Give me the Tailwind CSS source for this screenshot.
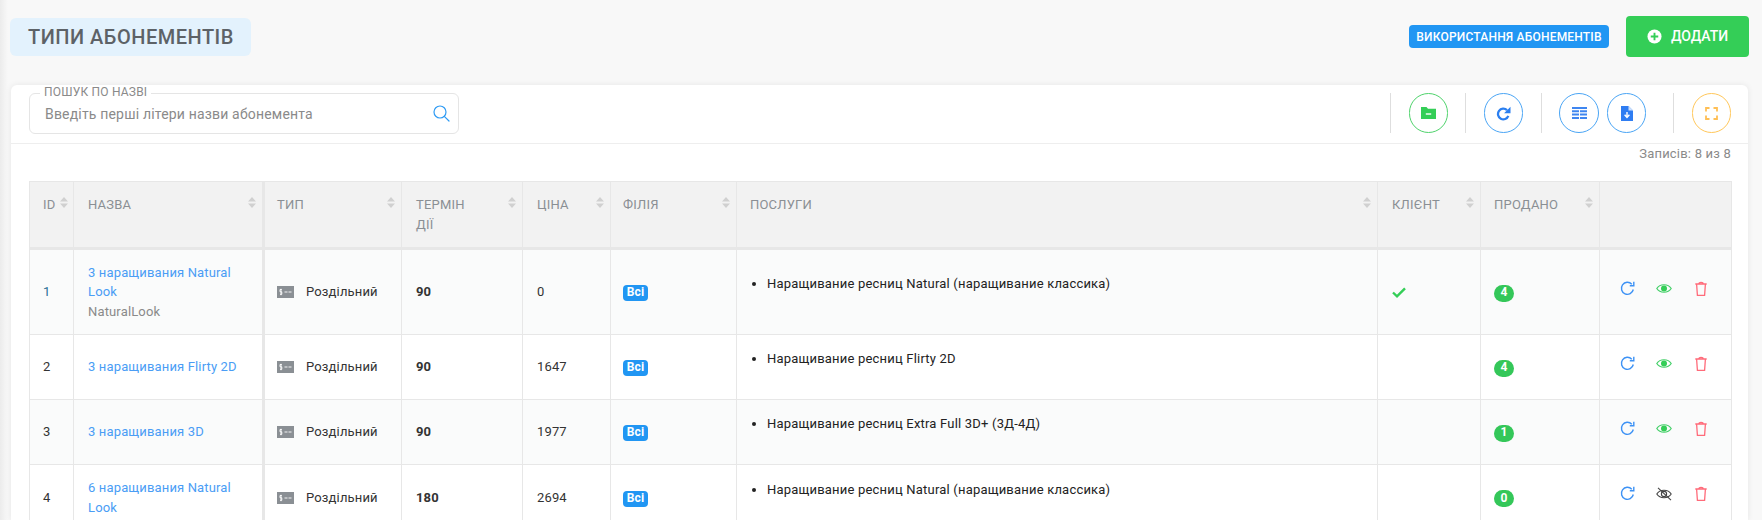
<!DOCTYPE html>
<html lang="uk">
<head>
<meta charset="utf-8">
<title>Типи абонементів</title>
<script src="https://cdn.jsdelivr.net/npm/@tailwindcss/browser@4"></script>
</head>
<body class="m-0 h-[520px] overflow-hidden bg-[#f8f8f8] font-['Roboto',sans-serif] text-[13px] text-[#333]">
<div class="pointer-events-none absolute left-0 top-0 h-[520px] w-2 bg-gradient-to-r from-black/5 to-transparent"></div>

<header class="flex h-[73px] items-center justify-between pl-[10px] pr-[13px] mb-[12px]">
  <h1 class="flex h-[38px] w-[241px] items-center rounded-md bg-[#e3f2fd] pl-[18px] text-[20px] font-medium tracking-[0.5px] text-[#5d6267]">ТИПИ АБОНЕМЕНТІВ</h1>
  <div class="flex items-center gap-[17px]">
    <a class="flex h-[23px] w-[200px] items-center justify-center rounded bg-[#2196f3] text-[12px] font-medium tracking-[0.2px] text-white">ВИКОРИСТАННЯ АБОНЕМЕНТІВ</a>
    <button class="flex h-[41px] w-[123px] items-center justify-center gap-[9px] rounded bg-[#34ce57] text-[14px] font-medium text-white">
      <svg class="h-[15px] w-[15px]" viewBox="0 0 16 16"><circle cx="8" cy="8" r="7.5" fill="#fff"/><path d="M8 4v8M4 8h8" stroke="#34ce57" stroke-width="2"/></svg>
      ДОДАТИ
    </button>
  </div>
</header>

<main class="ml-[11px] mr-[14px] h-[435px] rounded-t-md bg-white shadow-[0_0_6px_rgba(0,0,0,0.08)]">
  <div class="flex h-[59px] items-start justify-between border-b border-[#eeeeee] pl-[18px] pr-[17px] pt-[8px]">
    <div class="relative flex h-[41px] w-[430px] items-center rounded-md border border-[#e5e5e5] pl-[15px] pr-2">
      <span class="absolute left-[10px] top-[-9px] bg-white px-[4px] text-[12px] leading-[14px] tracking-[0.2px] text-[#8a8a8a]">ПОШУК ПО НАЗВІ</span>
      <span class="flex-1 pt-px text-[14px] tracking-[0.18px] text-[#8a8a8a]">Введіть перші літери назви абонемента</span>
      <svg class="h-[17px] w-[17px]" viewBox="0 0 17 17" fill="none" stroke="#2f9bf4" stroke-width="1.2"><circle cx="7" cy="7" r="6"/><path d="M11.3 11.3 16 16" stroke-linecap="round"/></svg>
    </div>
    <div class="flex items-center">
      <span class="h-10 w-px bg-[#dedede]"></span>
      <button class="ml-[18px] flex h-10 w-[39px] items-center justify-center rounded-full border border-[#4fd36c]">
        <svg class="h-[12px] w-[15px]" viewBox="0 0 15 12"><path d="M0 0h5.500l1.500 1.700h8V12H0z" fill="#34ce57"/><path d="M4.800 7h5.400" stroke="#fff" stroke-width="1.400"/></svg>
      </button>
      <span class="ml-[17px] h-10 w-px bg-[#dedede]"></span>
      <button class="ml-[18px] flex h-10 w-[39px] items-center justify-center rounded-full border border-[#4aa5f5]">
        <svg class="h-[15px] w-[15px]" viewBox="0 0 15 15" fill="none"><path d="M12.300 9.800A5.300 5.300 0 1 1 11 4.200" stroke="#2b7ff0" stroke-width="2.300"/><path d="M14.500 .8v6.400H8.100z" fill="#2b7ff0"/></svg>
      </button>
      <span class="ml-[18px] h-10 w-px bg-[#dedede]"></span>
      <button class="ml-[17px] flex h-10 w-[40px] items-center justify-center rounded-full border border-[#4aa5f5]">
        <svg class="h-[12px] w-[15px]" viewBox="0 0 15 12" fill="#3f86f0"><path d="M0 0h15v2H0zM0 3.300h7v2H0zM8 3.300h7v2H8zM0 6.600h7v2H0zM8 6.600h7v2H8zM0 9.900h7V12H0zM8 9.900h7V12H8z"/></svg>
      </button>
      <button class="ml-2 flex h-10 w-[39px] items-center justify-center rounded-full border border-[#4aa5f5]">
        <svg class="h-[15px] w-[12px]" viewBox="0 0 12 15"><path d="M0 0h7.500L12 4.500V15H0z" fill="#2f7df2"/><path d="M7.500 0v4.500H12z" fill="#cfe2fd"/><path d="M6 6v5M3.600 8.800 6 11.400l2.400-2.600" fill="none" stroke="#fff" stroke-width="1.400"/></svg>
      </button>
      <span class="ml-[27px] h-10 w-px bg-[#dedede]"></span>
      <button class="ml-[18px] flex h-10 w-[39px] items-center justify-center rounded-full border border-[#ffc75a]">
        <svg class="h-[13px] w-[13px]" viewBox="0 0 13 13" fill="none" stroke="#ffbf55" stroke-width="1.800"><path d="M1 4.500V1h3.500M8.500 1H12v3.500M12 8.500V12H8.500M4.500 12H1V8.500"/></svg>
      </button>
    </div>
  </div>

  <div class="h-[37px] pr-[17px] pt-[1px] text-right text-[13px] leading-[18px] tracking-[0.2px] text-[#8a8a8a]">Записів: 8 из 8</div>

  <table class="ml-[18px] w-[1702px] table-fixed border-collapse">
    <colgroup>
      <col class="w-[44px]"><col class="w-[190px]"><col class="w-[138px]"><col class="w-[121px]"><col class="w-[88px]"><col class="w-[126px]"><col class="w-[641px]"><col class="w-[103px]"><col class="w-[119px]"><col class="w-[132px]">
    </colgroup>
    <thead>
      <tr class="h-[67px] bg-[#f2f2f2] text-left align-top text-[13px] font-normal tracking-[0.2px] text-[#8a8f94]">
        <th class="relative border border-b-[3px] border-[#e7e7e7] pl-[13px] pt-[13px] font-normal leading-[20px]">ID<svg class="absolute right-[5px] top-[15px] h-[11px] w-[8px]" viewBox="0 0 8 11" fill="#d0d0d0"><path d="M4 0l4 4.500H0zM4 11L0 6.500h8z"/></svg></th>
        <th class="relative border border-b-[3px] border-r-[3px] border-[#e7e7e7] pl-[14px] pt-[13px] font-normal leading-[20px]">НАЗВА<svg class="absolute right-[6px] top-[15px] h-[11px] w-[8px]" viewBox="0 0 8 11" fill="#d0d0d0"><path d="M4 0l4 4.500H0zM4 11L0 6.500h8z"/></svg></th>
        <th class="relative border border-b-[3px] border-[#e7e7e7] pl-[12px] pt-[13px] font-normal leading-[20px]">ТИП<svg class="absolute right-[6px] top-[15px] h-[11px] w-[8px]" viewBox="0 0 8 11" fill="#d0d0d0"><path d="M4 0l4 4.500H0zM4 11L0 6.500h8z"/></svg></th>
        <th class="relative border border-b-[3px] border-[#e7e7e7] pl-[14px] pt-[13px] font-normal leading-[20px]">ТЕРМІН<br>ДІЇ<svg class="absolute right-[6px] top-[15px] h-[11px] w-[8px]" viewBox="0 0 8 11" fill="#d0d0d0"><path d="M4 0l4 4.500H0zM4 11L0 6.500h8z"/></svg></th>
        <th class="relative border border-b-[3px] border-[#e7e7e7] pl-[14px] pt-[13px] font-normal leading-[20px]">ЦІНА<svg class="absolute right-[6px] top-[15px] h-[11px] w-[8px]" viewBox="0 0 8 11" fill="#d0d0d0"><path d="M4 0l4 4.500H0zM4 11L0 6.500h8z"/></svg></th>
        <th class="relative border border-b-[3px] border-[#e7e7e7] pl-[12px] pt-[13px] font-normal leading-[20px]">ФІЛІЯ<svg class="absolute right-[6px] top-[15px] h-[11px] w-[8px]" viewBox="0 0 8 11" fill="#d0d0d0"><path d="M4 0l4 4.500H0zM4 11L0 6.500h8z"/></svg></th>
        <th class="relative border border-b-[3px] border-[#e7e7e7] pl-[13px] pt-[13px] font-normal leading-[20px]">ПОСЛУГИ<svg class="absolute right-[6px] top-[15px] h-[11px] w-[8px]" viewBox="0 0 8 11" fill="#d0d0d0"><path d="M4 0l4 4.500H0zM4 11L0 6.500h8z"/></svg></th>
        <th class="relative border border-b-[3px] border-[#e7e7e7] pl-[14px] pt-[13px] font-normal leading-[20px]">КЛІЄНТ<svg class="absolute right-[6px] top-[15px] h-[11px] w-[8px]" viewBox="0 0 8 11" fill="#d0d0d0"><path d="M4 0l4 4.500H0zM4 11L0 6.500h8z"/></svg></th>
        <th class="relative border border-b-[3px] border-[#e7e7e7] pl-[13px] pt-[13px] font-normal leading-[20px]">ПРОДАНО<svg class="absolute right-[6px] top-[15px] h-[11px] w-[8px]" viewBox="0 0 8 11" fill="#d0d0d0"><path d="M4 0l4 4.500H0zM4 11L0 6.500h8z"/></svg></th>
        <th class="border border-b-[3px] border-[#e7e7e7]"></th>
      </tr>
    </thead>
    <tbody class="leading-[19.5px] tracking-[0.15px] text-[#333]">
      <tr class="h-[86px] bg-[#fafbfb]">
        <td class="border border-[#e7e7e7] pl-[13px]"><span class="text-[#2a6f97]">1</span></td>
        <td class="border border-r-[3px] border-[#e7e7e7] pl-[14px] pr-[8px]"><a class="text-[#4a9df5]">3 наращивания Natural Look</a><div class="text-[#8a8a8a]">NaturalLook</div></td>
        <td class="border border-[#e7e7e7] pl-[12px]"><div class="flex items-center gap-[12px]"><svg class="h-[12px] w-[17px]" viewBox="0 0 17 12"><rect width="17" height="12" fill="#8a8f94"/><path d="M4.800 3.500H3v2.300h1.800v2.500H3M4 2.800v6.400M7.500 6h3M11.500 6h3" fill="none" stroke="#fff" stroke-width=".9"/></svg><span>Роздільний</span></div></td>
        <td class="border border-[#e7e7e7] pl-[14px] font-bold">90</td>
        <td class="border border-[#e7e7e7] pl-[14px]">0</td>
        <td class="border border-[#e7e7e7] pl-[12px]"><span class="inline-flex h-[16px] w-[25px] items-center justify-center rounded bg-[#2196f3] text-[12px] font-bold text-white">Всі</span></td>
        <td class="border border-[#e7e7e7] pl-[14px]"><ul class="mb-4 list-disc pl-[16px] leading-[20px] tracking-[0.2px] text-[#222]"><li>Наращивание ресниц Natural (наращивание классика)</li></ul></td>
        <td class="border border-[#e7e7e7] pl-[14px]"><svg class="h-[11px] w-[14px]" viewBox="0 0 14 11" fill="none" stroke="#34ce57" stroke-width="2.400"><path d="M1 5.500 5 9.300 13 1.300"/></svg></td>
        <td class="border border-[#e7e7e7] pl-[13px]"><span class="inline-flex h-[17px] w-[20px] items-center justify-center rounded-full bg-[#34c759] text-[12px] font-bold text-white">4</span></td>
        <td class="border border-[#e7e7e7] pl-[20px]"><div class="mb-2 flex items-center">
          <svg class="h-[15px] w-[15px]" viewBox="0 0 15 15" fill="none" stroke="#3d92f5" stroke-width="1.400"><path d="M13.300 8.500A6 6 0 1 1 11.800 3.200"/><path d="M13.800 .8v4H9.800"/></svg>
          <svg class="ml-[21px] h-[11px] w-[16px]" viewBox="0 0 16 11"><path d="M.800 5.500C4 .5 12 .5 15.200 5.500 12 10.500 4 10.500 .800 5.500Z" fill="none" stroke="#43cf68" stroke-width="1.200"/><circle cx="8" cy="5.500" r="3" fill="#34ce57"/></svg>
          <svg class="ml-[23px] h-[15px] w-[12px]" viewBox="0 0 12 15" fill="none" stroke="#ff6b7a" stroke-width="1.300"><path d="M.300 3h11.400M1.600 3l.8 11.300h7.200L10.400 3M3.800 3C3.800 .7 8.200 .7 8.200 3"/></svg>
        </div></td>
      </tr>
      <tr class="h-[65px] bg-white">
        <td class="border border-[#e7e7e7] pl-[13px]">2</td>
        <td class="border border-r-[3px] border-[#e7e7e7] pl-[14px] pr-[8px]"><a class="text-[#4a9df5]">3 наращивания Flirty 2D</a></td>
        <td class="border border-[#e7e7e7] pl-[12px]"><div class="flex items-center gap-[12px]"><svg class="h-[12px] w-[17px]" viewBox="0 0 17 12"><rect width="17" height="12" fill="#8a8f94"/><path d="M4.800 3.500H3v2.300h1.800v2.500H3M4 2.800v6.400M7.500 6h3M11.500 6h3" fill="none" stroke="#fff" stroke-width=".9"/></svg><span>Роздільний</span></div></td>
        <td class="border border-[#e7e7e7] pl-[14px] font-bold">90</td>
        <td class="border border-[#e7e7e7] pl-[14px]">1647</td>
        <td class="border border-[#e7e7e7] pl-[12px]"><span class="inline-flex h-[16px] w-[25px] items-center justify-center rounded bg-[#2196f3] text-[12px] font-bold text-white">Всі</span></td>
        <td class="border border-[#e7e7e7] pl-[14px]"><ul class="mb-4 list-disc pl-[16px] leading-[20px] tracking-[0.2px] text-[#222]"><li>Наращивание ресниц Flirty 2D</li></ul></td>
        <td class="border border-[#e7e7e7] pl-[14px]"></td>
        <td class="border border-[#e7e7e7] pl-[13px]"><span class="inline-flex h-[17px] w-[20px] items-center justify-center rounded-full bg-[#34c759] text-[12px] font-bold text-white">4</span></td>
        <td class="border border-[#e7e7e7] pl-[20px]"><div class="mb-2 flex items-center">
          <svg class="h-[15px] w-[15px]" viewBox="0 0 15 15" fill="none" stroke="#3d92f5" stroke-width="1.400"><path d="M13.300 8.500A6 6 0 1 1 11.800 3.200"/><path d="M13.800 .8v4H9.800"/></svg>
          <svg class="ml-[21px] h-[11px] w-[16px]" viewBox="0 0 16 11"><path d="M.800 5.500C4 .5 12 .5 15.200 5.500 12 10.500 4 10.500 .800 5.500Z" fill="none" stroke="#43cf68" stroke-width="1.200"/><circle cx="8" cy="5.500" r="3" fill="#34ce57"/></svg>
          <svg class="ml-[23px] h-[15px] w-[12px]" viewBox="0 0 12 15" fill="none" stroke="#ff6b7a" stroke-width="1.300"><path d="M.300 3h11.400M1.600 3l.8 11.300h7.200L10.400 3M3.800 3C3.800 .7 8.200 .7 8.200 3"/></svg>
        </div></td>
      </tr>
      <tr class="h-[65px] bg-[#fafbfb]">
        <td class="border border-[#e7e7e7] pl-[13px]">3</td>
        <td class="border border-r-[3px] border-[#e7e7e7] pl-[14px] pr-[8px]"><a class="text-[#4a9df5]">3 наращивания 3D</a></td>
        <td class="border border-[#e7e7e7] pl-[12px]"><div class="flex items-center gap-[12px]"><svg class="h-[12px] w-[17px]" viewBox="0 0 17 12"><rect width="17" height="12" fill="#8a8f94"/><path d="M4.800 3.500H3v2.300h1.800v2.500H3M4 2.800v6.400M7.500 6h3M11.500 6h3" fill="none" stroke="#fff" stroke-width=".9"/></svg><span>Роздільний</span></div></td>
        <td class="border border-[#e7e7e7] pl-[14px] font-bold">90</td>
        <td class="border border-[#e7e7e7] pl-[14px]">1977</td>
        <td class="border border-[#e7e7e7] pl-[12px]"><span class="inline-flex h-[16px] w-[25px] items-center justify-center rounded bg-[#2196f3] text-[12px] font-bold text-white">Всі</span></td>
        <td class="border border-[#e7e7e7] pl-[14px]"><ul class="mb-4 list-disc pl-[16px] leading-[20px] tracking-[0.2px] text-[#222]"><li>Наращивание ресниц Extra Full 3D+ (3Д-4Д)</li></ul></td>
        <td class="border border-[#e7e7e7] pl-[14px]"></td>
        <td class="border border-[#e7e7e7] pl-[13px]"><span class="inline-flex h-[17px] w-[20px] items-center justify-center rounded-full bg-[#34c759] text-[12px] font-bold text-white">1</span></td>
        <td class="border border-[#e7e7e7] pl-[20px]"><div class="mb-2 flex items-center">
          <svg class="h-[15px] w-[15px]" viewBox="0 0 15 15" fill="none" stroke="#3d92f5" stroke-width="1.400"><path d="M13.300 8.500A6 6 0 1 1 11.800 3.200"/><path d="M13.800 .8v4H9.800"/></svg>
          <svg class="ml-[21px] h-[11px] w-[16px]" viewBox="0 0 16 11"><path d="M.800 5.500C4 .5 12 .5 15.200 5.500 12 10.500 4 10.500 .800 5.500Z" fill="none" stroke="#43cf68" stroke-width="1.200"/><circle cx="8" cy="5.500" r="3" fill="#34ce57"/></svg>
          <svg class="ml-[23px] h-[15px] w-[12px]" viewBox="0 0 12 15" fill="none" stroke="#ff6b7a" stroke-width="1.300"><path d="M.300 3h11.400M1.600 3l.8 11.300h7.200L10.400 3M3.800 3C3.800 .7 8.200 .7 8.200 3"/></svg>
        </div></td>
      </tr>
      <tr class="h-[66px] bg-white">
        <td class="border border-[#e7e7e7] pl-[13px]">4</td>
        <td class="border border-r-[3px] border-[#e7e7e7] pl-[14px] pr-[8px]"><a class="text-[#4a9df5]">6 наращивания Natural Look</a></td>
        <td class="border border-[#e7e7e7] pl-[12px]"><div class="flex items-center gap-[12px]"><svg class="h-[12px] w-[17px]" viewBox="0 0 17 12"><rect width="17" height="12" fill="#8a8f94"/><path d="M4.800 3.500H3v2.300h1.800v2.500H3M4 2.800v6.400M7.500 6h3M11.500 6h3" fill="none" stroke="#fff" stroke-width=".9"/></svg><span>Роздільний</span></div></td>
        <td class="border border-[#e7e7e7] pl-[14px] font-bold">180</td>
        <td class="border border-[#e7e7e7] pl-[14px]">2694</td>
        <td class="border border-[#e7e7e7] pl-[12px]"><span class="inline-flex h-[16px] w-[25px] items-center justify-center rounded bg-[#2196f3] text-[12px] font-bold text-white">Всі</span></td>
        <td class="border border-[#e7e7e7] pl-[14px]"><ul class="mb-4 list-disc pl-[16px] leading-[20px] tracking-[0.2px] text-[#222]"><li>Наращивание ресниц Natural (наращивание классика)</li></ul></td>
        <td class="border border-[#e7e7e7] pl-[14px]"></td>
        <td class="border border-[#e7e7e7] pl-[13px]"><span class="inline-flex h-[17px] w-[20px] items-center justify-center rounded-full bg-[#34c759] text-[12px] font-bold text-white">0</span></td>
        <td class="border border-[#e7e7e7] pl-[20px]"><div class="mb-2 flex items-center">
          <svg class="h-[15px] w-[15px]" viewBox="0 0 15 15" fill="none" stroke="#3d92f5" stroke-width="1.400"><path d="M13.300 8.500A6 6 0 1 1 11.800 3.200"/><path d="M13.800 .8v4H9.800"/></svg>
          <svg class="ml-[21px] h-[14px] w-[16px]" viewBox="0 0 16 14" fill="none" stroke="#444" stroke-width="1.100"><path d="M.800 7C4 2 12 2 15.200 7 12 12 4 12 .800 7Z"/><circle cx="8" cy="7" r="2.600"/><path d="M2 .8 15 13.200"/></svg>
          <svg class="ml-[23px] h-[15px] w-[12px]" viewBox="0 0 12 15" fill="none" stroke="#ff6b7a" stroke-width="1.300"><path d="M.300 3h11.400M1.600 3l.8 11.300h7.200L10.400 3M3.800 3C3.800 .7 8.200 .7 8.200 3"/></svg>
        </div></td>
      </tr>
    </tbody>
  </table>
</main>
</body>
</html>
